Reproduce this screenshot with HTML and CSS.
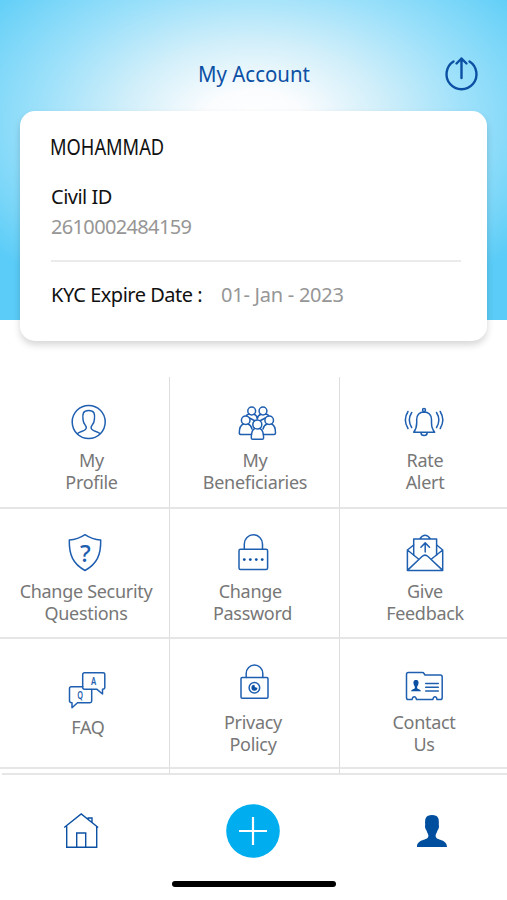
FILE: index.html
```
<!DOCTYPE html>
<html lang="en">
<head>
	<meta charset="UTF-8">
	<title>My Account</title>
	<link rel="stylesheet" href="styles.css">
</head>
<body>
	<div class="header">
		<div class="title-bar">
			<h1 class="title">My Account</h1>
			<svg class="logout" viewBox="0 0 36 36">
				<path d="M10.500 5.500A15 15 0 1 0 26.500 5.500M18.500 22V2.500M13.500 7.500L18.500 2.500L23.500 7.500"/>
			</svg>
		</div>
		<div class="card">
			<p class="name"><span>MOHAMMAD</span></p>
			<p class="label">Civil ID</p>
			<p class="value number">2610002484159</p>
			<div class="expire">
				<p class="label">KYC Expire Date :</p>
				<p class="value date">01- Jan - 2023</p>
			</div>
		</div>
	</div>
	<div class="menu">
		<div class="item profile">
			<svg class="icon" viewBox="0 0 40 40">
				<circle cx="19.700" cy="20" r="16.500"/>
				<path d="M8.500 31.500C12 28.500 17.300 29.500 17.300 25.500C17.300 23.500 14.300 22.300 14 17.500C13.300 12 14 8.500 19.700 8.500S26.100 12 25.400 17.500C25.100 22.300 22.100 23.500 22.100 25.500C22.100 29.500 27.400 28.500 30.900 31.500"/>
			</svg>
			<p>My<br>Profile</p>
		</div>
		<div class="item beneficiaries">
			<svg class="icon" viewBox="0 0 40 40">
				<circle cx="14.700" cy="9" r="3.900"/>
				<circle cx="26" cy="9" r="3.900"/>
				<circle cx="8.700" cy="18.300" r="4.300"/>
				<circle cx="32.200" cy="18.300" r="4.300"/>
				<circle cx="20.300" cy="22.500" r="4.500"/>
				<path d="M9.500 13.500Q10 12 12.500 12.300M17 12.300Q20 13.500 20.300 17Q20.600 13.500 24 12.300M28.500 12.300Q31 12 31.500 13.500M12.500 16L17.300 18.500M28.300 16L23.500 18.500"/>
				<path d="M14.500 32.500H4Q2.300 32.500 2.300 31Q2.300 23.500 6.500 22M11 22Q14 23 15 27M26.300 32.500H37Q38.500 32.500 38.500 31Q38.500 23.500 34.500 22M30 22Q27 23 26 27"/>
				<path d="M17.800 26.500C15 27.500 14.300 31 14.300 36Q14.300 37.300 15.700 37.300H25.200Q26.600 37.300 26.600 36C26.600 31 25.500 27.500 22.800 26.500"/>
			</svg>
			<p>My<br>Beneficiaries</p>
		</div>
		<div class="item rate">
			<svg class="icon" viewBox="0 0 40 40">
				<circle cx="20" cy="8" r="1.500"/>
				<path d="M9.700 30.200Q12.700 26.500 12.700 21V17.500Q13 10 20 9.900Q27.200 10 27.500 17.500V21Q27.500 26.500 30.700 30.200ZM17 30.500A3.100 3.100 0 0 0 23.200 30.500"/>
				<path d="M7.700 10.500Q3 18 7.700 25.500M4 9.500Q-1.300 18 4 26.500M32.500 10.500Q37.200 18 32.500 25.500M36.200 9.500Q41.500 18 36.200 26.500"/>
			</svg>
			<p>Rate<br>Alert</p>
		</div>
		<div class="item security">
			<svg class="icon" viewBox="0 0 40 40">
				<path d="M20 1.700Q13 6.500 4.300 7C4 22 8 31 20 37.500C32 31 36 22 35.700 7Q27 6.500 20 1.700Z"/>
				<text class="mark" x="20.300" y="28.700">?</text>
			</svg>
			<p>Change Security<br>Questions</p>
		</div>
		<div class="item password">
			<svg class="icon" viewBox="0 0 40 40">
				<rect x="6" y="16.200" width="28.600" height="20.400" rx="1.500"/>
				<path d="M11.300 16V11A9.100 9.300 0 0 1 29.500 11V16"/>
				<g class="fill">
					<circle cx="11.300" cy="26.600" r="1.400"/>
					<circle cx="17.300" cy="26.600" r="1.400"/>
					<circle cx="23.300" cy="26.600" r="1.400"/>
					<circle cx="29.200" cy="26.600" r="1.400"/>
				</g>
			</svg>
			<p>Change&nbsp;<br>Password</p>
		</div>
		<div class="item feedback">
			<svg class="icon" viewBox="0 0 40 40">
				<path d="M2.400 17V37.400H37.700V17L31.700 12M2.400 17L8.700 12M2.400 17L13.500 26M37.700 17L26.500 26M2.400 37.400L17 23.500Q20 20.800 23 23.500L37.700 37.400"/>
				<path d="M8.700 22V6H31.600V22M14.700 6Q20 -1.500 25.500 6M20.200 19V10M15.900 14.200L20.200 9.900L24.500 14.200"/>
			</svg>
			<p>Give<br>Feedback</p>
		</div>
		<div class="item faq">
			<svg class="icon" viewBox="0 0 40 40">
				<path d="M17.500 3.800H36Q37.800 3.800 37.800 5.500V18.500Q37.800 20.200 35.500 20.200V25L29.700 20.200H17.500Q15.700 20.200 15.700 18.500V5.500Q15.700 3.800 17.500 3.800Z"/>
				<path d="M15.700 17.700H4.200Q2.500 17.700 2.500 19.500V32Q2.500 33.700 5 33.700V38.700L10.500 33.700H23Q24.700 33.700 24.700 32V20.500"/>
				<text class="letter" x="24" y="16" textLength="5.200" lengthAdjust="spacingAndGlyphs">A</text>
				<text class="letter" x="10.300" y="29.600" textLength="5.800" lengthAdjust="spacingAndGlyphs">Q</text>
			</svg>
			<p>FAQ</p>
		</div>
		<div class="item privacy">
			<svg class="icon" viewBox="0 0 40 40">
				<rect x="7" y="13.500" width="27" height="20.800" rx="1.200"/>
				<path d="M12.200 13.500V9.500A8.300 8.500 0 0 1 28.800 9.500V13.500"/>
				<circle cx="20.400" cy="23.700" r="5.300"/>
				<path class="fill" d="M20.400 20.700A3 3 0 1 0 23.400 23.700Q20.400 24 20.400 20.700Z"/>
			</svg>
			<p>Privacy<br>Policy</p>
		</div>
		<div class="item contact">
			<svg class="icon" viewBox="0 0 40 40">
				<path d="M4.300 8.500H18.500Q19.500 8.500 20 9.500L21 11H36.300Q38.200 11 38.200 13V33.500Q38.200 35.600 36.300 35.600H33Q32.700 32.700 31 32.700T28.800 35.600H12.500Q12 32.700 10.300 32.700T8 35.600H4.300Q2.500 35.600 2.500 33.500V10.500Q2.500 8.500 4.300 8.500Z"/>
				<path d="M21.700 19.400H34.300M21.700 23.300H34.300M21.700 27H34.300"/>
				<path class="fill" d="M12 16C9.500 16 9.300 18 9.500 19.500C9.800 21.500 11 22.200 10.900 23.700C10.700 25.300 7.700 25 7 27.200H17C16.300 25 13.300 25.300 13.100 23.700C13 22.200 14.200 21.500 14.500 19.500C14.700 18 14.500 16 12 16Z"/>
			</svg>
			<p>Contact<br>Us</p>
		</div>
		<div class="next"></div>
		<div class="next"></div>
		<div class="next"></div>
	</div>
	<div class="tab-bar">
		<svg class="home" viewBox="0 0 36 36">
			<path d="M1.200 14.500L18.200 1L35.200 14.500M3.700 13V34.200H33.700V13M13.700 34V20H22.700V34M25.200 6.300V5H29V9.800"/>
		</svg>
		<svg class="add" viewBox="0 0 54 54">
			<circle cx="27" cy="27" r="26.800"/>
			<path d="M27 13V41M13 27H41"/>
		</svg>
		<svg class="user" viewBox="0 0 30 32">
			<path d="M15 0C8.500 0 7.700 4 8.200 9.500C7.500 12.500 8.700 14.500 9.500 15.500C10.200 18 11.500 19 11.400 21C11.200 26 0 23.500 0 32H30C30 23.500 18.800 26 18.600 21C18.500 19 19.800 18 20.500 15.500C21.300 14.500 22.500 12.500 21.800 9.500C22.300 4 21.500 0 15 0Z"/>
		</svg>
	</div>
	<div class="home-line"></div>
</body>
</html>
```

FILE: styles.css
```
* {
	padding: 0;
	margin: 0;
	box-sizing: border-box;
}
html, body {
	width: 100%;
	height: 100%;
	background: #fff;
	overflow: hidden;
	font-family: "Noto Sans", sans-serif;
}
svg {
	display: block;
	flex: none;
}
.header {
	height: 320px;
	background: radial-gradient(ellipse 335px 205px at 50% 120px, #fff 0%, #fafcfe 15%, #d2effa 38%, #9be0fa 65%, #76d5f8 85%, #5accf7 100%);
}
.title-bar {
	height: 111px;
	padding: 56px 28px 0 65px;
	display: flex;
	align-items: flex-start;
	justify-content: space-between;
}
.title {
	flex: 1;
	padding-top: 3px;
	font-size: 21.5px;
	line-height: 30px;
	font-weight: 400;
	text-align: center;
	color: #0c50a4;
	transform: scaleX(.95);
}
.logout {
	width: 36px;
	height: 36px;
	fill: none;
	stroke: #0c50a4;
	stroke-width: 2.4;
	stroke-linecap: round;
	stroke-linejoin: round;
}
.card {
	height: 230px;
	margin: 0 20px;
	padding: 21px 26px 0 31px;
	background: #fff;
	border-radius: 15px;
	box-shadow: 0 4px 7px rgba(0, 0, 0, .16);
}
.name {
	height: 50px;
	font-size: 21px;
	line-height: 30px;
	color: #111;
}
.name span {
	display: inline-block;
	transform: scaleX(.87);
	transform-origin: 0 0;
	margin-left: -1px;
}
.label {
	font-size: 20px;
	line-height: 30px;
	letter-spacing: -.5px;
	color: #111;
}
.value {
	font-size: 20px;
	line-height: 30px;
	letter-spacing: -.65px;
	color: #969696;
}
.value.date {
	letter-spacing: -.25px;
}
.number {
	height: 48px;
}
.expire {
	display: flex;
	gap: 19px;
	padding-top: 18px;
	border-top: 2px solid #ebebeb;
}
.menu {
	display: grid;
	grid-template-columns: 170px 170px 1fr;
	grid-template-rows: 132px 130px 130px 6px;
	margin-top: 57px;
}
.item, .next {
	border-right: 1px solid #dedede;
	border-bottom: 2px solid #e6e6e6;
}
.item:nth-child(3n), .next:nth-child(3n) {
	border-right: 0;
}
.next:nth-child(10) {
	margin-left: 2px;
}
.item {
	display: flex;
	flex-direction: column;
	align-items: center;
	gap: 7px;
	padding-top: 25px;
	font-size: 18px;
	line-height: 22px;
	letter-spacing: -.3px;
	text-align: center;
	color: #777;
	white-space: nowrap;
}
.icon {
	width: 40px;
	height: 40px;
	overflow: visible;
	fill: none;
	stroke: #1f5fb0;
	stroke-width: 1.5;
	stroke-linecap: round;
	stroke-linejoin: round;
}
.icon .fill {
	fill: #0c50a4;
	stroke: none;
}
.icon text {
	fill: #1f5fb0;
	stroke: none;
	letter-spacing: 0;
}
.mark {
	font-size: 24px;
	font-weight: 500;
	text-anchor: middle;
}
.letter {
	font-size: 11.5px;
	font-weight: 600;
}
.profile {
	padding-left: 14px;
}
.profile .icon {
	margin-right: 5px;
}
.beneficiaries {
	padding-left: 1px;
}
.beneficiaries .icon {
	margin-left: 3px;
}
.rate, .feedback {
	padding-left: 3px;
}
.rate .icon {
	margin-right: 2px;
}
.security, .password, .feedback {
	padding-top: 24px;
}
.security {
	padding-left: 3px;
}
.security .icon {
	margin-right: 2px;
}
.password {
	padding-right: 4px;
}
.faq {
	padding-top: 30px;
	padding-left: 7px;
}
.faq .icon {
	margin-right: 2px;
}
.privacy {
	padding-right: 3px;
}
.privacy .icon {
	margin-left: 2px;
}
.contact {
	padding-left: 1px;
}
.tab-bar {
	display: grid;
	grid-template-columns: 163px 1fr 30px;
	align-items: center;
	height: 106px;
	padding: 6px 60px 0 63px;
}
.home {
	width: 36px;
	height: 36px;
	fill: none;
	stroke: #0c50a4;
	stroke-width: 1.4;
}
.add {
	width: 54px;
	height: 54px;
}
.add circle {
	fill: #00adef;
}
.add path {
	fill: none;
	stroke: #fff;
	stroke-width: 2.2;
}
.user {
	width: 30px;
	height: 32px;
	fill: #004f9f;
}
.home-line {
	width: 164px;
	height: 6px;
	margin-left: 172px;
	background: #000;
	border-radius: 3px;
}
```
